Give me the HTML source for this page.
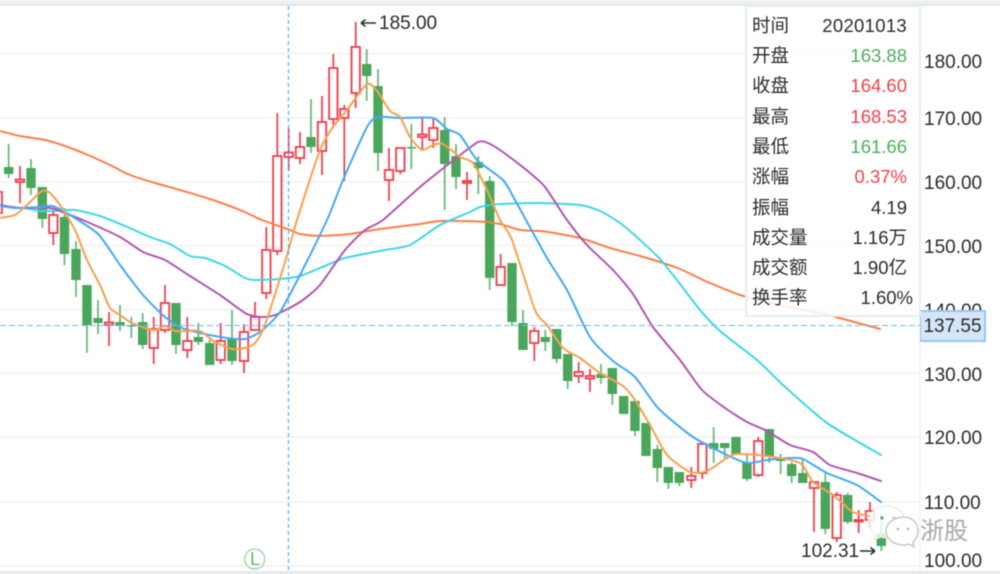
<!DOCTYPE html>
<html><head><meta charset="utf-8"><style>
html,body{margin:0;padding:0;background:#fff}
#r{position:relative;width:1000px;height:574px;overflow:hidden;background:#fff;font-family:"Liberation Sans","Noto Sans CJK SC",sans-serif;font-size:18.5px;color:#2b2b2b;filter:blur(.45px)}
svg{position:absolute;left:0;top:0}
.a{position:absolute;left:924px;line-height:22px;height:22px;font-size:19px;margin-top:1.500px}
#p{position:absolute;left:745px;top:5px;width:172px;height:308px;background:rgba(255,255,255,.85);border:2px solid #e6ebf0}
.w{position:absolute;left:5px;width:155px;height:24px;line-height:24px;display:flex;justify-content:space-between;white-space:nowrap}
.g{color:#4cae5e}.d{color:#f0414f}
#b{position:absolute;left:920px;top:310px;width:63px;height:28px;background:#d6e6fa;border:2px solid #93c6f6;border-width:2px 2px 2px 1px;line-height:29px;text-align:center;font-size:19px}
.t{position:absolute;white-space:nowrap;line-height:22px;font-size:19px}
</style></head><body><div id="r">
<svg width="1000" height="574" viewBox="0 0 1000 574">
<rect width="1000" height="5" fill="#eef1f4"/><rect y="4" width="1000" height="2" fill="#e4e7ea"/>
<rect y="571" width="1000" height="3" fill="#e6e9ec"/>
<path d="M0 53.500H920M0 118H920M0 182H920M0 245.500H920M0 309.500H920M0 373H920M0 437H920M0 502H920M0 566H920" stroke="#f0f0f1" stroke-width="1.500" fill="none"/>
<path d="M920 5V571" stroke="#eeeeef" stroke-width="1.200"/>
<path d="M8.700 144V178M31 159V195M42.300 187V228M64.500 208V265M76 241V297M87 285V353M98 300V334M120 305V331M131.300 317V338M142.700 313V349M176 303V354M198.300 323V345M209.700 340V365M232 310V365M311 99V153M366.700 49V101M378 69V171M411.300 124V169M444.700 117V210M456 144V189M478.300 156V194M489.700 176V290M512 263V326M523 310V350M545.300 330V351M556.700 329V363M567.700 354V389M601 364V384M612.300 368V405M623.700 396V414M635 401V436M646 423V456M657.300 445V482M668.300 467V489M679.300 472V486M713.700 427V463M724.700 443V458M736 437V455M747 453V481M769.300 429V463M780.700 454V474M791.700 462V483M802.700 458V483M825.300 473V534M847.700 493V524M881.300 513V551" stroke="#6cb97b" stroke-width="1.800" fill="none"/>
<path d="M8.700 167V174M31 168V188M42.300 187V219M64.500 217V254M76 249V280M87 285V325M98 318V323M120 322V326M131.300 325V326.500M142.700 322V345M176 303V345M198.300 337V342M209.700 343V365M232 338V361M311 137V147M366.700 64V76M378 86V153M411.300 147V148.500M444.700 130V164M456 156V177M478.300 162V168M489.700 181V278M512 263V322M523 323V350M545.300 337V342M556.700 329V359M567.700 354V381M601 374V378M612.300 368V394M623.700 396V414M635 401V431M646 423V456M657.300 449V468M668.300 467V483M679.300 472V483M713.700 443V449M724.700 443V448M736 437V455M747 463V479M769.300 429V456M780.700 458V461M791.700 464V476M802.700 473V483M825.300 482V529M847.700 495V522M881.300 533V546" stroke="#4aa65b" stroke-width="9.400" fill="none"/>
<path d="M20 166V203M53.300 212V245M109 312V346M153.700 317V364M165 285V333M187.300 317V358M220.700 323V364M244 324V373M255 302V330M266.300 227V299M277.300 113V255M288.700 128V171M300 132V164M322 96V175M333.300 54V125M344.300 105V181M355.700 22V108M389 148V201M400.300 148V174M422.300 117V149M433.300 119V148M467 172V200M500.700 254V286M534.300 327V361M578.700 362V383M590 369V392M691.300 467V488M702.300 443V479M758.300 437V477M814 482V532M836.700 492V542M858.700 510V533M870 502V527" stroke="#ee4453" stroke-width="1.800" fill="none"/>
<g fill="#fff" stroke="#ee4453" stroke-width="1.900">
<rect x="15.800" y="179.500" width="8.400" height="2.500"/><rect x="49.100" y="215" width="8.400" height="18"/><rect x="104.800" y="322.500" width="8.400" height="2.500"/><rect x="149.500" y="329" width="8.400" height="19"/><rect x="160.800" y="303" width="8.400" height="27"/><rect x="183.100" y="341" width="8.400" height="9"/><rect x="216.500" y="341" width="8.400" height="19"/><rect x="239.800" y="332" width="8.400" height="29"/><rect x="250.800" y="317" width="8.400" height="13"/><rect x="262.100" y="250" width="8.400" height="43"/><rect x="273.100" y="156" width="8.400" height="95"/><rect x="284.500" y="152.500" width="8.400" height="4.500"/><rect x="295.800" y="147" width="8.400" height="11"/><rect x="317.800" y="122" width="8.400" height="29"/><rect x="329.100" y="68" width="8.400" height="51"/><rect x="340.100" y="109" width="8.400" height="9"/><rect x="351.500" y="47" width="8.400" height="46"/><rect x="384.800" y="170" width="8.400" height="10"/><rect x="396.100" y="148" width="8.400" height="23"/><rect x="418.100" y="134.500" width="8.400" height="2.500"/><rect x="429.100" y="128" width="8.400" height="12"/><rect x="462.800" y="181" width="8.400" height="2"/><rect x="496.500" y="267" width="8.400" height="18"/><rect x="530.100" y="331" width="8.400" height="12"/><rect x="574.500" y="372" width="8.400" height="4"/><rect x="585.800" y="376" width="8.400" height="2.500"/><rect x="687.100" y="476" width="8.400" height="4"/><rect x="698.100" y="444" width="8.400" height="29"/><rect x="754.100" y="441" width="8.400" height="34"/><rect x="809.800" y="482" width="8.400" height="6"/><rect x="832.500" y="495" width="8.400" height="43"/><rect x="854.500" y="520" width="8.400" height="1.500"/><rect x="865.800" y="511" width="8.400" height="9"/><rect x="-6" y="192" width="8" height="21"/>
</g>
<g id="ma" fill="none" stroke-width="2" stroke-linejoin="round" stroke-linecap="round">
<polyline stroke="#ff7d45" points="0,131 20,136 45,140 65,146 88,155 110,165 130,175 155,183 180,190 210,199 240,210 262,220 290,230 300,234 320,236 350,234 380,229 420,224 440,221 480,221.500 500,224 520,230 540,231 560,234 580,238 590,241 610,248 640,256 660,262 680,269 695,276 710,283 740,295 770,303 800,309 828,315 880,329"/>
<polyline stroke="#3fd6e6" points="0,206 30,209 40,211 55,211 75,210 100,216 125,226 150,237 170,244 190,256 205,258 225,266 245,278 255,280 280,279 300,276 320,268 345,258 385,250 410,245 440,225 470,212 480,207 500,204 540,203 580,205 600,211 620,223 640,240 660,259 680,284 700,310 720,331 757,360 783,385 827,423 881,455"/>
<polyline stroke="#b257ae" points="0,205 20,208 50,208 70,215 85,221 120,237 143,252 165,260 190,276 220,295 245,313 260,317 275,315 300,302 320,285 345,250 365,230 383,220 420,187 450,163 478,142 490,144 507,155 530,173 545,187 567,220 587,245 613,270 633,294 653,327 680,360 702,390 725,408 747,422 767,431 790,445 813,452 830,465 857,473 881,481"/>
<polyline stroke="#45a9f5" points="0,206 15,208 40,207 52,206 65,212 98,234 120,265 143,295 165,317 182,328 200,333 215,336 235,339 245,339 255,335 265,328 280,312 300,275 327,220 343,180 367,127 378,117 400,118 433,118 447,129 460,135 477,160 503,180 515,200 547,258 567,290 590,337 613,361 635,377 658,408 693,437 727,455 747,463 767,460 790,458 803,459 827,473 857,485 881,502"/>
<polyline stroke="#f9a04f" points="0,218 15,215 27,205 42,191 50,193 60,205 75,230 87,260 100,285 110,308 120,315 130,322 145,328 155,330 165,326 175,331 187,331 200,331 215,342 232,349 245,348 255,343 265,325 285,262 297,220 320,150 333,127 347,110 367,84 377,91 390,111 400,117 410,137 422,150 433,145 443,144 460,157 473,163 487,190 500,220 512,240 535,310 547,325 563,348 580,358 600,373 623,386 635,400 650,425 667,455 690,472 707,471 727,458 737,454 767,456 800,463 813,482 833,495 853,512 875,517"/>
</g>
<path d="M288.500 6V571" stroke="#55adf6" stroke-width="1.200" stroke-dasharray="4 3" fill="none"/>
<path d="M0 325.500H920" stroke="#6db8f6" stroke-width="1.100" stroke-dasharray="6 3" fill="none"/>
<circle cx="254.700" cy="559" r="10" fill="#fff" stroke="#a5d8ae" stroke-width="1.500"/>
</svg>
<script>
(function(){var g=document.getElementById('ma');var ls=[].slice.call(g.querySelectorAll('polyline'));
ls.forEach(function(l){var p=l.getAttribute('points').trim().split(/\s+/).map(function(s){return s.split(',').map(Number)});
var d='M'+p[0][0]+' '+p[0][1];for(var i=0;i<p.length-1;i++){var a=p[i-1]||p[i],b=p[i],c=p[i+1],e=p[i+2]||c;
d+='C'+(b[0]+(c[0]-a[0])/9).toFixed(1)+' '+(b[1]+(c[1]-a[1])/9).toFixed(1)+' '+(c[0]-(e[0]-b[0])/9).toFixed(1)+' '+(c[1]-(e[1]-b[1])/9).toFixed(1)+' '+c[0]+' '+c[1];}
var n=document.createElementNS('http://www.w3.org/2000/svg','path');n.setAttribute('d',d);n.setAttribute('stroke',l.getAttribute('stroke'));g.replaceChild(n,l);});})();
</script>
<div class="t" style="left:249px;top:550px;color:#5fb66e;font-size:18px;line-height:18px;width:12px;text-align:center">L</div>
<div class="a" style="top:50px">180.00</div>
<div class="a" style="top:107px">170.00</div>
<div class="a" style="top:171px">160.00</div>
<div class="a" style="top:235px">150.00</div>
<div class="a" style="top:299px">140.00</div>
<div class="a" style="top:363px">130.00</div>
<div class="a" style="top:426px">120.00</div>
<div class="a" style="top:491px">110.00</div>
<div class="a" style="top:549px">100.00</div>
<div id="b">137.55</div>
<div id="p">
<div class="w" style="top:7px"><span>时间</span><span style="letter-spacing:.3px">20201013</span></div>
<div class="w" style="top:37px"><span>开盘</span><span class="g">163.88</span></div>
<div class="w" style="top:67px"><span>收盘</span><span class="d">164.60</span></div>
<div class="w" style="top:98px"><span>最高</span><span class="d">168.53</span></div>
<div class="w" style="top:128px"><span>最低</span><span class="g">161.66</span></div>
<div class="w" style="top:158px"><span>涨幅</span><span class="d">0.37%</span></div>
<div class="w" style="top:189px"><span>振幅</span><span>4.19</span></div>
<div class="w" style="top:219px"><span>成交量</span><span>1.16万</span></div>
<div class="w" style="top:249px"><span>成交额</span><span>1.90亿</span></div>
<div class="w" style="top:279px;width:161px"><span>换手率</span><span>1.60%</span></div>
</div>
<div class="t" style="left:379px;top:13px">185.00</div>
<div class="t" style="left:801px;top:541px">102.31</div>
<svg width="1000" height="574" viewBox="0 0 1000 574">
<path d="M361 23H376M361 23l4.500-3.500M361 23l4.500 3.500M860 551H875M875 551l-4.500-3.500M875 551l-4.500 3.500" stroke="#2b2b2b" stroke-width="1.500" fill="none"/>
<path d="M887 506c-11 0-19 7-19 16 0 5 3 10 7 12l-1 6 7-3c2 1 4 1 6 1 10 0 18-7 18-16s-8-16-18-16z" fill="#fff" fill-opacity=".82" stroke="#e6e6e6"/>
<path d="M904 517c-10 0-18 6-18 14s8 14 18 14c2 0 3 0 5-1l5 3-1-5c3-3 5-7 5-11 0-8-6-14-14-14z" fill="#fff" stroke="#c8c8c8" stroke-width="1.500"/>
<circle cx="882" cy="518" r="1.600" fill="#4aa65b"/><circle cx="894" cy="518" r="1.600" fill="#ccc"/>
<circle cx="898" cy="529" r="1.400" fill="#bbb"/><circle cx="908" cy="529" r="1.400" fill="#bbb"/>
</svg>
<div class="t" style="left:920px;top:520px;color:#a8a8a8;font-size:24px;line-height:24px">浙股</div>
</div></body></html>
